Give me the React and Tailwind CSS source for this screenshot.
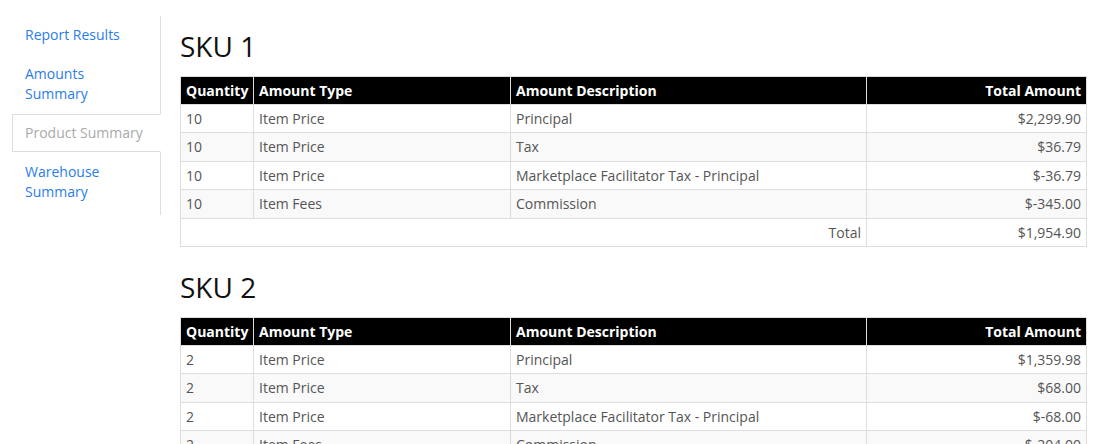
import React from "react";

const skus = [
  {
    name: "SKU 1",
    rows: [
      ["10", "Item Price", "Principal", "$2,299.90"],
      ["10", "Item Price", "Tax", "$36.79"],
      ["10", "Item Price", "Marketplace Facilitator Tax - Principal", "$-36.79"],
      ["10", "Item Fees", "Commission", "$-345.00"],
    ],
    total: "$1,954.90",
  },
  {
    name: "SKU 2",
    rows: [
      ["2", "Item Price", "Principal", "$1,359.98"],
      ["2", "Item Price", "Tax", "$68.00"],
      ["2", "Item Price", "Marketplace Facilitator Tax - Principal", "$-68.00"],
      ["2", "Item Fees", "Commission", "$-204.00"],
    ],
    total: "$1,087.98",
  },
];

const navItems = [
  { label: "Report Results" },
  { label: "Amounts Summary" },
  { label: "Product Summary", active: true },
  { label: "Warehouse Summary" },
];

function SkuTable({ sku, first }) {
  const cell = "border border-[#ddd] px-[5px] py-[4px] leading-[19.5px]";
  const head = "border border-[#ddd] px-[5px] py-[3.5px] leading-[19.5px]";
  return (
    <div>
      <h2
        className={
          "text-[28px] leading-[34px] font-normal text-[#111] mb-[13px] " +
          (first ? "mt-[13px]" : "mt-[23px]")
        }
      >
        {sku.name}
      </h2>
      <table className="w-full table-fixed border-collapse text-[14px] text-[#555]">
        <colgroup>
          <col className="w-[73px]" />
          <col className="w-[257px]" />
          <col className="w-[356px]" />
          <col />
        </colgroup>
        <thead>
          <tr className="bg-black text-white font-bold">
            <th className={head + " text-left"}>Quantity</th>
            <th className={head + " text-left"}>Amount Type</th>
            <th className={head + " text-left"}>Amount Description</th>
            <th className={head + " text-right"}>Total Amount</th>
          </tr>
        </thead>
        <tbody>
          {sku.rows.map((r, i) => (
            <tr key={i} className={i % 2 === 1 ? "bg-[#f9f9f9]" : "bg-white"}>
              <td className={cell}>{r[0]}</td>
              <td className={cell}>{r[1]}</td>
              <td className={cell}>{r[2]}</td>
              <td className={cell + " text-right"}>{r[3]}</td>
            </tr>
          ))}
          <tr className="bg-white">
            <td colSpan={3} className={cell + " text-right"}>
              Total
            </td>
            <td className={cell + " text-right"}>{sku.total}</td>
          </tr>
        </tbody>
      </table>
    </div>
  );
}

export default function App() {
  return (
    <div
      className="h-[444px] overflow-hidden bg-white flex pt-4 pl-3 pr-[13px]"
      style={{ fontFamily: '"Open Sans", sans-serif' }}
    >
      {/* Sidebar */}
      <div className="w-[149px] shrink-0 self-start">
        <ul className="flex flex-col gap-px border-r border-[#ddd] pb-1 text-[14px] leading-5">
          {navItems.map((item) => (
            <li
              key={item.label}
              className={
                item.active
                  ? "-mr-px bg-white border border-[#ddd] border-r-transparent px-3 py-2 text-[#aaa]"
                  : "border border-transparent px-3 py-2 text-[#2b7de9]"
              }
            >
              {item.active ? (
                item.label
              ) : (
                <a href="#" className="pr-6 block">
                  {item.label}
                </a>
              )}
            </li>
          ))}
        </ul>
      </div>

      {/* Main */}
      <div className="flex-1 ml-[19px]">
        {skus.map((s, i) => (
          <SkuTable key={s.name} sku={s} first={i === 0} />
        ))}
      </div>
    </div>
  );
}
